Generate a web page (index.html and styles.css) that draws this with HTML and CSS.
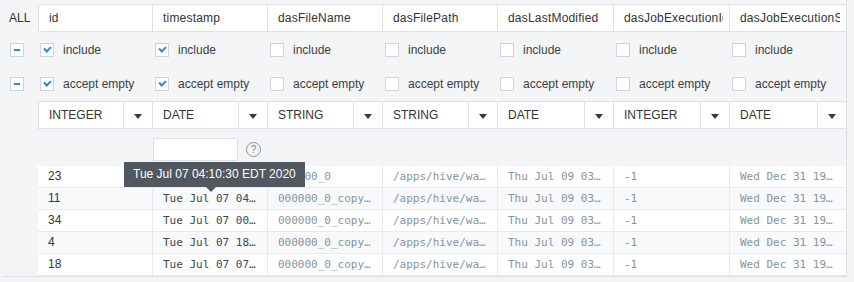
FILE: index.html
```html
<!DOCTYPE html>
<html lang="en">
<head>
    <meta charset="UTF-8">
    <title>Column filters</title>
    <link rel="stylesheet" href="styles.css">
</head>
<body>
    <div class="grid">
        <div class="row head">
            <div class="lbl">ALL</div>
            <div class="cell"><span>id</span></div>
            <div class="cell"><span>timestamp</span></div>
            <div class="cell"><span>dasFileName</span></div>
            <div class="cell"><span>dasFilePath</span></div>
            <div class="cell"><span>dasLastModified</span></div>
            <div class="cell"><span>dasJobExecutionId</span></div>
            <div class="cell"><span>dasJobExecutionStartTime</span></div>
        </div>

        <div class="row opts">
            <div class="lbl"><span class="minus"></span></div>
            <label class="opt"><span class="box on"></span>include</label>
            <label class="opt"><span class="box on"></span>include</label>
            <label class="opt"><span class="box"></span>include</label>
            <label class="opt"><span class="box"></span>include</label>
            <label class="opt"><span class="box"></span>include</label>
            <label class="opt"><span class="box"></span>include</label>
            <label class="opt"><span class="box"></span>include</label>
        </div>

        <div class="row opts">
            <div class="lbl"><span class="minus"></span></div>
            <label class="opt"><span class="box on"></span>accept empty</label>
            <label class="opt"><span class="box on"></span>accept empty</label>
            <label class="opt"><span class="box"></span>accept empty</label>
            <label class="opt"><span class="box"></span>accept empty</label>
            <label class="opt"><span class="box"></span>accept empty</label>
            <label class="opt"><span class="box"></span>accept empty</label>
            <label class="opt"><span class="box"></span>accept empty</label>
        </div>

        <div class="row types">
            <div class="lbl"></div>
            <div class="cell type"><span>INTEGER</span><i class="arrow"></i></div>
            <div class="cell type"><span>DATE</span><i class="arrow"></i></div>
            <div class="cell type"><span>STRING</span><i class="arrow"></i></div>
            <div class="cell type"><span>STRING</span><i class="arrow"></i></div>
            <div class="cell type"><span>DATE</span><i class="arrow"></i></div>
            <div class="cell type"><span>INTEGER</span><i class="arrow"></i></div>
            <div class="cell type"><span>DATE</span><i class="arrow"></i></div>
        </div>

        <div class="row filters">
            <div class="lbl"></div>
            <div></div>
            <div class="filter"><input type="text"><span class="help">?</span></div>
        </div>

        <div class="data">
            <div class="row rec">
                <div class="lbl"></div>
                <div class="c id">23</div>
                <div class="c ts">Tue Jul 07 04…</div>
                <div class="c">000000_0</div>
                <div class="c">/apps/hive/wa…</div>
                <div class="c">Thu Jul 09 03…</div>
                <div class="c">-1</div>
                <div class="c">Wed Dec 31 19…</div>
            </div>
            <div class="row rec">
                <div class="lbl"></div>
                <div class="c id">11</div>
                <div class="c ts">Tue Jul 07 04…</div>
                <div class="c">000000_0_copy…</div>
                <div class="c">/apps/hive/wa…</div>
                <div class="c">Thu Jul 09 03…</div>
                <div class="c">-1</div>
                <div class="c">Wed Dec 31 19…</div>
            </div>
            <div class="row rec">
                <div class="lbl"></div>
                <div class="c id">34</div>
                <div class="c ts">Tue Jul 07 00…</div>
                <div class="c">000000_0_copy…</div>
                <div class="c">/apps/hive/wa…</div>
                <div class="c">Thu Jul 09 03…</div>
                <div class="c">-1</div>
                <div class="c">Wed Dec 31 19…</div>
            </div>
            <div class="row rec">
                <div class="lbl"></div>
                <div class="c id">4</div>
                <div class="c ts">Tue Jul 07 18…</div>
                <div class="c">000000_0_copy…</div>
                <div class="c">/apps/hive/wa…</div>
                <div class="c">Thu Jul 09 03…</div>
                <div class="c">-1</div>
                <div class="c">Wed Dec 31 19…</div>
            </div>
            <div class="row rec">
                <div class="lbl"></div>
                <div class="c id">18</div>
                <div class="c ts">Tue Jul 07 07…</div>
                <div class="c">000000_0_copy…</div>
                <div class="c">/apps/hive/wa…</div>
                <div class="c">Thu Jul 09 03…</div>
                <div class="c">-1</div>
                <div class="c">Wed Dec 31 19…</div>
            </div>

            <div class="tooltip">Tue Jul 07 04:10:30 EDT 2020</div>
        </div>
    </div>
</body>
</html>
```

FILE: styles.css
```css
body {
    margin: 0;
    background-color: #f3f5f7;
    font-family: "Liberation Sans", Arial, sans-serif;
    font-size: 12px;
    color: #333;
}
.grid {
    width: 844px;
    margin-left: 2px;
    padding-top: 4px;
    border-right: 1px solid #dde1e5;
    border-bottom: 1px solid #dde1e5;
}
.row {
    display: grid;
    grid-template-columns: 36px 115px 115px 115px 115px 116px 116px 116px;
}
.lbl {
    display: flex;
    align-items: center;
    padding-left: 7px;
}

/* header */
.head {
    height: 28px;
}
.head .cell {
    display: flex;
    background-color: #fff;
    border-top: 1px solid #dde1e5;
    border-bottom: 1px solid #dde1e5;
    border-right: 1px solid #dde1e5;
    padding: 0 6px 0 10px;
    line-height: 26px;
    min-width: 0;
}
.head .cell span {
    white-space: nowrap;
    overflow: hidden;
    letter-spacing: 0.2px;
}
.head .cell:nth-child(2),
.types .cell:nth-child(2) {
    border-left: 1px solid #dde1e5;
}
.head .cell:last-child,
.types .cell:last-child {
    border-right: none;
}

/* include / accept empty */
.opts {
    height: 35px;
    align-items: center;
}
.opts + .opts {
    height: 34px;
}
.opts .lbl {
    padding-left: 8px;
}
.minus {
    width: 12px;
    height: 12px;
    border: 1px solid #cfd5db;
    background-color: #fff;
    position: relative;
}
.minus::after {
    content: "";
    position: absolute;
    left: 3px;
    top: 5px;
    width: 6px;
    height: 2px;
    background-color: #2b8ad8;
}
.opt {
    display: flex;
    align-items: center;
    padding-left: 2px;
    color: #3a3f44;
    white-space: nowrap;
}
.box {
    width: 12px;
    height: 12px;
    border: 1px solid #cfd5db;
    background-color: #fff;
    margin-right: 9px;
    position: relative;
}
.box.on::after {
    content: "";
    position: absolute;
    left: 3px;
    top: 2px;
    width: 5px;
    height: 3px;
    border-left: 2px solid #2b8ad8;
    border-bottom: 2px solid #2b8ad8;
    transform: rotate(-45deg);
}

/* type selects */
.types {
    height: 28px;
}
.types .cell {
    display: flex;
    background-color: #fff;
    border-top: 1px solid #dde1e5;
    border-bottom: 1px solid #dde1e5;
    border-right: 1px solid #dde1e5;
}
.type span {
    flex: 1;
    padding-left: 10px;
    line-height: 26px;
}
.arrow {
    width: 28px;
    border-left: 1px solid #dde1e5;
    display: flex;
    align-items: center;
    justify-content: center;
}
.arrow::after {
    content: "";
    border-left: 4px solid transparent;
    border-right: 4px solid transparent;
    border-top: 5px solid #2d3b48;
    margin-top: 2px;
}

/* filter row */
.filters {
    height: 37px;
}
.filter {
    display: flex;
    align-items: center;
    padding-top: 4px;
}
.filter input {
    width: 85px;
    height: 23px;
    box-sizing: border-box;
    border: 1px solid #dde1e5;
    background-color: #fff;
    margin: 0;
    padding: 0;
}
.help {
    width: 13px;
    height: 13px;
    border: 1px solid #8d949b;
    border-radius: 50%;
    margin-left: 8px;
    font-size: 10px;
    line-height: 13px;
    text-align: center;
    color: #7c838a;
}

/* records */
.data {
    position: relative;
}
.rec {
    height: 22px;
}
.rec .c {
    background-color: #fff;
    border-bottom: 1px solid #e8ebee;
    border-right: 1px solid #e8ebee;
    padding-left: 10px;
    line-height: 21px;
    font-family: "DejaVu Sans Mono", monospace;
    font-size: 11px;
    color: #8595a2;
    white-space: nowrap;
    overflow: hidden;
}
.rec:nth-child(even) .c {
    background-color: #f7f9fa;
}
.rec .c:last-child {
    border-right: none;
}
.rec:last-of-type .c {
    border-bottom: none;
}
.rec .c.id {
    font-family: "Liberation Sans", Arial, sans-serif;
    font-size: 12px;
    color: #333;
}
.rec .c.ts {
    color: #40474e;
}

.tooltip {
    position: absolute;
    left: 122px;
    top: -4px;
    height: 25px;
    line-height: 25px;
    padding: 0 9px;
    background-color: #51585f;
    color: #fff;
    font-size: 12px;
    white-space: nowrap;
}
.tooltip::after {
    content: "";
    position: absolute;
    left: 82px;
    top: 25px;
    border-left: 5px solid transparent;
    border-right: 5px solid transparent;
    border-top: 5px solid #51585f;
}
```
